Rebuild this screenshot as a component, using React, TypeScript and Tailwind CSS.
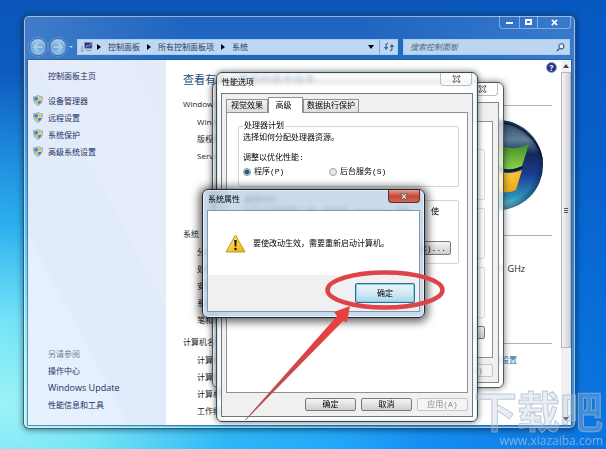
import type { ReactNode } from "react";

const CJK = "font-['Open_Sans','Noto_Sans_CJK_SC',sans-serif]";
const SONG = "font-['Liberation_Mono','Noto_Sans_CJK_SC',monospace]";

function Shield() {
  return (
    <svg viewBox="0 0 20 22" className="h-[11px] w-[10px] shrink-0" aria-hidden="true">
      <path d="M10 1 C13 3 16 3.500 19 3.500 C19 12 17 18 10 21 C3 18 1 12 1 3.500 C4 3.500 7 3 10 1Z" fill="#dfe6ec" stroke="#7f8ea2" strokeWidth="1.500" />
      <path d="M9.500 3.500 V11 H3 C2.500 9 2.500 7 2.500 5 C5 5 7.500 4.500 9.500 3.500Z" fill="#3f7fc0" />
      <path d="M10.500 3.500 V11 H17 C17.500 9 17.500 7 17.500 5 C15 5 12.500 4.500 10.500 3.500Z" fill="#cfd04a" />
      <path d="M9.500 12 V19 C6 17.500 4 15 3.300 12Z" fill="#bccb50" />
      <path d="M10.500 12 V19 C14 17.500 16 15 16.700 12Z" fill="#3c76b8" />
    </svg>
  );
}

function CloseGlyph({ className }: { className: string }) {
  return (
    <svg viewBox="0 0 16 14" className={className} aria-hidden="true">
      <path d="M1.500 1.500 H5.500 L8 4.500 L10.500 1.500 H14.500 L10.500 7 L14.500 12.500 H10.500 L8 9.500 L5.500 12.500 H1.500 L5.500 7Z" fill="#fff" stroke="#4b4f55" strokeWidth="1.600" />
    </svg>
  );
}

function NavButton({ label, flip }: { label: string; flip?: boolean }) {
  return (
    <button aria-label={label} className="flex size-[18px] items-center justify-center rounded-full border border-[#356aa6] bg-linear-to-b from-[#b3d0ec] via-[#6ea3d8] to-[#93c6ee] shadow-[0_0_2px_rgba(255,255,255,0.6)]">
      <svg viewBox="0 0 12 12" className={flip ? "size-3 rotate-180" : "size-3"} aria-hidden="true">
        <path d="M6 2 L2 6 L6 10 M2.500 6 H10.500" fill="none" stroke="#a9cdee" strokeWidth="2" />
      </svg>
    </button>
  );
}

function PushButton({ children, disabled, className = "" }: { children: ReactNode; disabled?: boolean; className?: string }) {
  return (
    <button
      disabled={disabled}
      className={`h-[13px] w-[51px] rounded-xs border text-[8px] leading-[11px] ${disabled ? "border-[#c3c5c8] bg-[#f5f5f5] text-[#8a8a8a]" : "border-[#7a7a7a] bg-linear-to-b from-[#f4f4f4] to-[#cfcfcf] text-black"} ${className}`}
    >
      {children}
    </button>
  );
}

function Section({ title, className = "" }: { title: string; className?: string }) {
  return (
    <div className={`flex h-[17px] items-center gap-2 ${className}`}>
      <h2 className="text-[8px] whitespace-nowrap">{title}</h2>
      <span className="mt-[3px] h-px flex-1 bg-[#b4b4b4]" />
    </div>
  );
}

function Row({ label, children }: { label: string; children?: ReactNode }) {
  return (
    <div className="flex h-[17px] items-center justify-between pl-[14px] whitespace-nowrap">
      <span>{label}</span>
      {children}
    </div>
  );
}

function WindowsOrb() {
  return (
    <svg viewBox="0 0 92 92" className="mt-[7px] mr-2 size-[92px]" aria-label="Windows" role="img">
      <defs>
        <linearGradient id="orb" x1="0" y1="0" x2="0" y2="1">
          <stop offset="0" stopColor="#2c4560" />
          <stop offset="0.220" stopColor="#5f7f98" />
          <stop offset="0.380" stopColor="#13295a" />
          <stop offset="0.620" stopColor="#1b3f94" />
          <stop offset="0.850" stopColor="#2b94b8" />
          <stop offset="1" stopColor="#7fd3df" />
        </linearGradient>
        <radialGradient id="rim" cx="0.500" cy="0.500" r="0.500">
          <stop offset="0.850" stopColor="#0a1d4a" stopOpacity="0" />
          <stop offset="1" stopColor="#0a1d4a" stopOpacity="0.500" />
        </radialGradient>
        <linearGradient id="green" x1="0" y1="0" x2="0" y2="1">
          <stop offset="0" stopColor="#3f8f2c" />
          <stop offset="1" stopColor="#8ed04a" />
        </linearGradient>
        <linearGradient id="gold" x1="0" y1="0" x2="1" y2="1">
          <stop offset="0" stopColor="#ffe94a" />
          <stop offset="1" stopColor="#f09a12" />
        </linearGradient>
      </defs>
      <circle cx="46" cy="46" r="45" fill="url(#orb)" />
      <circle cx="46" cy="46" r="45" fill="url(#rim)" />
      <path d="M1 45 A45 45 0 0 1 90 40" fill="none" stroke="#0b1830" strokeWidth="1.500" />
      <path d="M22 27 C32 21 38 22 44 25 L40 45 C34 42 27 42 18 46Z" fill="#e8582a" />
      <path d="M46 25 C56 31 66 30 77 25 L70 47 C60 52 52 51 42 46Z" fill="url(#green)" />
      <path d="M42 48 C52 53 60 53 71 48" fill="none" stroke="#0c1a30" strokeWidth="2" />
      <path d="M17 49 C26 45 33 45 39 48 L35 68 C29 65 21 65 12 69Z" fill="#3f8fe0" />
      <path d="M41 50 C52 55 60 55 70 51 L64 71 C54 75 46 74 36 70Z" fill="url(#gold)" />
    </svg>
  );
}

const tasks = ["设备管理器", "远程设置", "系统保护", "高级系统设置"];
const related = ["操作中心", "Windows Update", "性能信息和工具"];

function ControlPanel() {
  return (
    <section aria-label="系统" className="absolute top-[15px] right-[30px] bottom-[20px] left-[23px] flex flex-col rounded-md border border-[#1d3f68]/80 bg-[linear-gradient(90deg,rgba(255,255,255,0.22)_0%,rgba(255,255,255,0.08)_30%,rgba(255,255,255,0.08)_60%,rgba(255,255,255,0.2)_100%)] px-1 pb-[3px] shadow-[0_1px_6px_rgba(0,0,0,0.5),inset_0_0_0_1px_rgba(255,255,255,0.5)]">
      <header className="flex h-[22px] shrink-0 justify-end">
        <div className="flex h-[13px] divide-x divide-white/40 rounded-b border border-t-0 border-white/40 text-white">
          <button aria-label="最小化" className="flex w-5 items-end justify-center pb-1">
            <span className="h-[2px] w-[7px] bg-white" />
          </button>
          <button aria-label="最大化" className="flex w-[18px] items-center justify-center">
            <span className="h-[6px] w-[7px] border-2 border-white" />
          </button>
          <button aria-label="关闭" className="flex w-8 items-center justify-center">
            <svg viewBox="0 0 8 8" className="size-[7px]" aria-hidden="true">
              <path d="M1 1 L7 7 M7 1 L1 7" stroke="#fff" strokeWidth="2" />
            </svg>
          </button>
        </div>
      </header>
      <div className="flex h-[22px] shrink-0 items-start pr-px pl-px">
        <div className="flex w-12 items-center gap-[2px]">
          <NavButton label="后退" />
          <NavButton label="前进" flip />
          <span className="border-x-2 border-t-2 border-x-transparent border-t-white/70" />
        </div>
        <nav aria-label="地址" className="mt-px flex h-4 flex-1 items-center border border-[#a9cdf0] bg-[#bed8f3] text-[8px] text-[#2c3e57]">
          <svg viewBox="0 0 14 12" className="ml-[3px] h-[10px] w-3" aria-hidden="true">
            <rect x="4" y="0.500" width="9" height="7" fill="#25308c" stroke="#8b99ad" />
            <path d="M5.500 6 L8 4 L9 5 L12 2" stroke="#dfe8ff" fill="none" />
            <path d="M6 10 H12 M1 5 V11 M0 11 H3" stroke="#7f8fa6" strokeWidth="1.200" />
          </svg>
          <ol className="flex flex-1 items-center">
            {["控制面板", "所有控制面板项", "系统"].map((crumb, index) => (
              <li key={crumb} className="flex items-center">
                <span className={index === 0 ? "mr-[7px] ml-1 border-y-[3px] border-l-4 border-y-transparent border-l-black" : "mx-[7px] border-y-[3px] border-l-4 border-y-transparent border-l-black"} />
                <a href="#crumb">{crumb}</a>
              </li>
            ))}
          </ol>
          <button aria-label="展开地址" className="flex w-4 justify-center">
            <span className="border-x-[3px] border-t-4 border-x-transparent border-t-black" />
          </button>
          <button aria-label="刷新" className="flex h-full w-[18px] items-center justify-center border-l border-[#7ea6d2]">
            <svg viewBox="0 0 12 12" className="size-[10px]" aria-hidden="true">
              <path d="M4.500 1 L2.500 3 V8 M0.500 6 L2.500 8.500 L4.500 6 M7.500 11 L9.500 9 V4 M7.500 6 L9.500 3.500 L11.500 6" fill="none" stroke="#2f5f87" strokeWidth="1.300" />
            </svg>
          </button>
        </nav>
        <label className="mt-px ml-[5px] flex h-4 w-[167px] items-center border border-[#a9cdf0] bg-[#bcd6f1] pr-1 pl-[6px]">
          <input aria-label="搜索" placeholder="搜索控制面板" className="min-w-0 flex-1 bg-transparent text-[8px] italic outline-none placeholder:text-[#55697f]" />
          <svg viewBox="0 0 10 10" className="size-[9px]" aria-hidden="true">
            <circle cx="6" cy="3.700" r="2.800" fill="#e4f1fc" stroke="#2d5f93" strokeWidth="1.200" />
            <path d="M4 6 L1 9" stroke="#2d5f93" strokeWidth="1.600" />
          </svg>
        </label>
      </div>
      <div className="flex min-h-0 flex-1 bg-white text-[8px] leading-[17px] text-[#1c1c1c] shadow-[0_0_0_1px_rgba(40,80,120,0.6)]">
        <aside className="flex w-[138px] shrink-0 flex-col bg-[linear-gradient(62deg,#e7f0fd_0%,#e6effd_30%,#e2ebf9_31%,#e2ebfa_60%,#e6edfa_61%,#e4ecf9_100%)] pt-2 pb-3 pl-[5px] text-[#1e2f5c]">
          <a href="#home" className="h-4 pl-[15px] leading-4">控制面板主页</a>
          <ul className="mt-2">
            {tasks.map((task) => (
              <li key={task} className="flex h-[17px] items-center gap-[5px]">
                <Shield />
                <a href="#task">{task}</a>
              </li>
            ))}
          </ul>
          <h2 className="mt-auto pl-[15px] text-[#7a8290]">另请参阅</h2>
          <ul className="pl-[15px]">
            {related.map((item) => (
              <li key={item} className={item === "Windows Update" ? "h-[17px] text-[9px]" : "h-[17px]"}>
                <a href="#related">{item}</a>
              </li>
            ))}
          </ul>
        </aside>
        <main className="min-w-0 flex-1 overflow-hidden pl-[17px]">
          <div className="flex justify-between pr-1">
            <h1 className="mt-3 h-4 text-[11px] leading-4 text-[#1f4e79]">查看有关计算机的基本信息</h1>
            <button aria-label="帮助" className="mt-[2px] size-[11px] rounded-full border border-[#8fa0cf] bg-[#27338f] text-[8px] leading-[9px] font-bold text-white">?</button>
          </div>
          <div className="pr-[9px]">
            <Section title="Windows 版本" className="mt-[7px]" />
            <div className="flex justify-between">
              <div className="pt-px">
                <Row label="Windows 7" />
                <Row label="版权所有" />
                <Row label="Service Pack 1" />
              </div>
              <WindowsOrb />
            </div>
            <Section title="系统" className="mt-[14px] mb-px" />
            <Row label="分级:" />
            <Row label="处理器:">
              <span className="mr-[27px] text-[9px]">2.71 GHz</span>
            </Row>
            <Row label="安装内存:" />
            <Row label="系统类型:" />
            <Row label="笔和触摸:" />
            <Section title="计算机名称" className="mt-[5px] mb-px" />
            <Row label="计算机名:">
              <a href="#settings" className="mr-[35px] text-[#1f6c9c]">更改设置</a>
            </Row>
            <Row label="计算机全名:" />
            <Row label="计算机描述:" />
            <Row label="工作组:" />
          </div>
        </main>
        <div className="flex w-[10px] shrink-0 flex-col items-center bg-[#f1f1f3]">
          <span className="my-1 border-x-[3px] border-b-4 border-x-transparent border-b-[#444]" />
          <div className="flex h-[276px] w-full flex-col items-center justify-center gap-px border border-[#b5b5b9] bg-linear-to-r from-[#f6f6f6] to-[#cfd0d3]">
            <span className="h-px w-1 bg-[#555]" />
            <span className="h-px w-1 bg-[#555]" />
            <span className="h-px w-1 bg-[#555]" />
          </div>
          <span className="mt-auto mb-1 border-x-[3px] border-t-4 border-x-transparent border-t-[#444]" />
        </div>
      </div>
    </section>
  );
}

function SystemProperties() {
  return (
    <section aria-label="系统属性选项" className={`absolute top-[82px] left-[212px] flex h-[306px] w-[292px] flex-col rounded-md border border-[#4f5862] bg-white/70 px-1 pb-1 shadow-[0_0_7px_rgba(0,0,0,0.55)] backdrop-blur-[2px] ${SONG}`}>
      <header className="flex h-[19px] shrink-0 justify-end pr-[1px]">
        <button aria-label="关闭" className="flex h-[13px] w-8 items-center justify-center rounded-b border border-t-0 border-[#b5bcc4]">
          <CloseGlyph className="h-[8px] w-[9px]" />
        </button>
      </header>
      <div className="flex flex-1 flex-col border border-[#7f868e] bg-[#f0f0f0] px-[5px] pb-1">
        <div className="mt-[18px] flex h-[237px] flex-col gap-[8px] border border-[#8d9197] bg-white px-[7px] pt-[27px]">
          <div className="h-[51px] rounded-xs border border-[#dcdcdc]" />
          <div className="h-[51px] rounded-xs border border-[#dcdcdc]" />
          <div className="h-[51px] rounded-xs border border-[#dcdcdc]" />
          <PushButton className="self-end">设置</PushButton>
        </div>
        <PushButton disabled className="mt-[6px] self-end">应用(A)</PushButton>
      </div>
    </section>
  );
}

function PerformanceOptions() {
  return (
    <section aria-label="性能选项" className={`absolute top-[72px] left-[216px] w-[262px] rounded-md border border-[#3f4952] bg-white/65 px-1 pb-1 text-[8px] leading-3 text-black shadow-[0_0_6px_rgba(0,0,0,0.6),inset_0_0_0_1px_rgba(190,235,245,0.6)] backdrop-blur-[2px] ${SONG}`}>
      <header className="flex h-5 justify-between pr-px pl-[1px]">
        <h2 className="leading-[20px]">性能选项</h2>
        <button aria-label="关闭" className="flex h-[13px] w-8 items-center justify-center rounded-b border border-t-0 border-[#aebfc8] bg-white/50">
          <CloseGlyph className="h-[8px] w-[9px]" />
        </button>
      </header>
      <div className="border border-[#6f7880] bg-[#f0f0f0] px-[4px] pt-[3px] pb-[5px]">
        <div role="tablist" className="flex items-end">
          <button role="tab" className="h-[13px] w-[42px] border border-b-0 border-[#8d9197] bg-linear-to-b from-[#f3f3f3] to-[#dedede]">视觉效果</button>
          <button role="tab" aria-selected="true" className="z-10 -mb-px h-4 w-[35px] border border-b-0 border-[#8d9197] bg-white pr-2 pl-[4px]">高级</button>
          <button role="tab" className="h-[13px] w-[56px] border border-b-0 border-[#8d9197] bg-linear-to-b from-[#f3f3f3] to-[#dedede] whitespace-nowrap">数据执行保护</button>
        </div>
        <div role="tabpanel" className="h-[281px] border border-[#8d9197] bg-white pt-[7px] pr-2 pl-[11px]">
          <fieldset className="h-[67px] rounded-xs border border-[#d5d5d5] px-1">
            <legend className="px-px">处理器计划</legend>
            <p>选择如何分配处理器资源。</p>
            <p className="mt-2">调整以优化性能:</p>
            <div className="mt-[2px] flex">
              <label className="flex w-[86px] items-center gap-[3px]">
                <input type="radio" name="plan" defaultChecked className="size-2 appearance-none rounded-full border border-[#8796a3] bg-white checked:bg-[radial-gradient(circle,#1f5f86_0_2px,#dceaf3_3px)]" />
                程序(P)
              </label>
              <label className="flex items-center gap-[3px]">
                <input type="radio" name="plan" className="size-2 appearance-none rounded-full border border-[#9a9fa5] bg-[#e8e8e8]" />
                后台服务(S)
              </label>
            </div>
          </fieldset>
          <fieldset className="mt-[7px] flex h-[70px] flex-col rounded-xs border border-[#d5d5d5] px-1">
            <legend className="px-px">虚拟内存</legend>
            <p className="flex justify-between pr-[15px] whitespace-nowrap"><span>分页文件是硬盘上的一块区域，Windows 当作</span><span>使</span></p>
            <PushButton className="mt-[23px] mr-[3px] h-[14px] w-[60px] self-end pr-1 text-right">更改(C)...</PushButton>
          </fieldset>
        </div>
        <div className="mt-[5px] flex justify-end gap-[5px]">
          <PushButton>确定</PushButton>
          <PushButton>取消</PushButton>
          <PushButton disabled>应用(A)</PushButton>
        </div>
      </div>
    </section>
  );
}

function RestartPrompt() {
  return (
    <section role="dialog" aria-label="系统属性" className={`absolute top-[189px] left-[202px] w-[223px] rounded-md border border-[#20262d] bg-linear-to-b from-[#b9cfe4]/75 to-[#bcd4ea]/85 px-1 pb-[5px] text-[8px] text-black shadow-[0_1px_9px_3px_rgba(0,0,0,0.6),inset_0_0_0_1px_rgba(255,255,255,0.6)] backdrop-blur-[2px] ${CJK}`}>
      <header className="flex h-5 justify-between">
        <h2 className="pl-px leading-[18px]">系统属性</h2>
        <button aria-label="关闭" className="flex h-[13px] w-8 items-center justify-center rounded-b border border-t-0 border-[#6e2a24] bg-linear-to-b from-[#e3a094] via-[#c4493a] to-[#d4654e]">
          <CloseGlyph className="h-[7px] w-[8px]" />
        </button>
      </header>
      <div className="border border-[#8497aa] bg-[#f0eff1]">
        <div className="flex h-[64px] items-center gap-[7px] bg-white pl-[17px]">
          <svg viewBox="0 0 42 38" className="h-[19px] w-[21px]" aria-hidden="true">
            <defs>
              <linearGradient id="warn" x1="0" y1="0" x2="1" y2="1">
                <stop offset="0" stopColor="#fff27a" />
                <stop offset="1" stopColor="#efa90c" />
              </linearGradient>
            </defs>
            <path d="M21 2 L40 36 H2Z" fill="url(#warn)" stroke="#b9952c" strokeWidth="2" strokeLinejoin="round" />
            <path d="M18.500 12 H23.500 L22.500 25 H19.500Z" fill="#1f1c10" />
            <circle cx="21" cy="30" r="2.600" fill="#1f1c10" />
          </svg>
          <p>要使改动生效，需要重新启动计算机。</p>
        </div>
        <div className="flex justify-end pt-[8px] pr-1 pb-2">
          <button className="h-5 w-[60px] rounded-xs border border-[#2f6f8c] bg-linear-to-b from-[#e9f4fa] via-[#d5e9f4] to-[#a9d7ea] shadow-[inset_0_0_0_1px_#7fd0ea]">确定</button>
        </div>
      </div>
    </section>
  );
}

function Marker() {
  return (
    <svg viewBox="0 0 606 449" className="pointer-events-none absolute top-0 left-0 h-[449px] w-[606px]" aria-hidden="true">
      <defs>
        <linearGradient id="arrow" x1="0" y1="1" x2="1" y2="0">
          <stop offset="0" stopColor="#a8525a" />
          <stop offset="0.500" stopColor="#d0464a" />
          <stop offset="0.800" stopColor="#e8403f" />
        </linearGradient>
      </defs>
      <ellipse cx="385" cy="290" rx="57.500" ry="17.500" fill="none" stroke="#dd4347" strokeWidth="4.500" />
      <path d="M245 420 L337 316 L334 312 L350 306 L347 322 L343 321 L246 420Z" fill="url(#arrow)" />
    </svg>
  );
}

export default function App() {
  return (
    <div className={`relative min-h-screen overflow-hidden bg-[#0d6fd8] bg-[radial-gradient(ellipse_420px_330px_at_0%_90%,#9df3f6_0%,#74e4f6_25%,rgba(50,190,245,0.8)_55%,transparent_100%),linear-gradient(100deg,transparent_60%,rgba(0,90,205,0.6)_100%),linear-gradient(180deg,#0b56b8_0%,#0f63c8_35%,#1288e8_75%,#1b9dfb_100%)] ${CJK}`}>
      <ControlPanel />
      <SystemProperties />
      <PerformanceOptions />
      <RestartPrompt />
      <Marker />
      <div className="absolute right-[3px] bottom-0 flex flex-col items-end whitespace-nowrap">
        <span className="text-[43px] leading-[42px] font-bold text-[#b9c8da]/30 [-webkit-text-stroke:1px_rgba(165,182,200,0.7)]">下载吧</span>
        <span className="text-[12px] leading-4 text-[#a8c6e6]/70">www.xiazaiba.com</span>
      </div>
    </div>
  );
}
